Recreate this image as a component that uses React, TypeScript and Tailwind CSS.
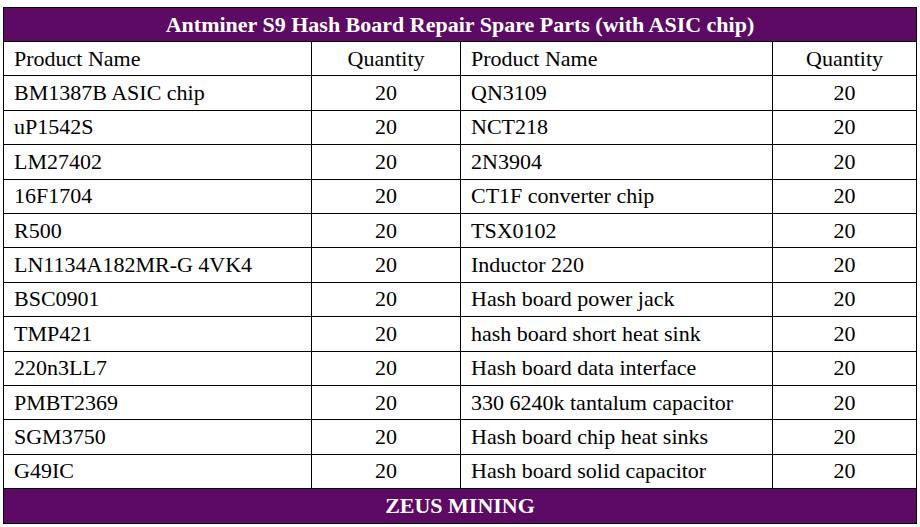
import React from "react";

const LEFT = [
  "BM1387B ASIC chip",
  "uP1542S",
  "LM27402",
  "16F1704",
  "R500",
  "LN1134A182MR-G 4VK4",
  "BSC0901",
  "TMP421",
  "220n3LL7",
  "PMBT2369",
  "SGM3750",
  "G49IC",
];

const RIGHT = [
  "QN3109",
  "NCT218",
  "2N3904",
  "CT1F converter chip",
  "TSX0102",
  "Inductor 220",
  "Hash board power jack",
  "hash board short heat sink",
  "Hash board data interface",
  "330 6240k tantalum capacitor",
  "Hash board chip heat sinks",
  "Hash board solid capacitor",
];

const cell = "border border-black h-[34.4px] p-0 align-middle";

export default function App() {
  return (
    <div className="w-[920px] h-[527px] bg-white pt-[7px] pl-[3px] font-['Liberation_Serif','Times_New_Roman',serif] text-[22px] leading-none text-black">
      <table className="w-[913px] border-collapse table-fixed font-['Liberation_Serif','Times_New_Roman',serif] text-[22px]">
        <colgroup>
          <col className="w-[308px]" />
          <col className="w-[149px]" />
          <col className="w-[312px]" />
          <col className="w-[144px]" />
        </colgroup>
        <thead>
          <tr>
            <th
              colSpan={4}
              className="border border-black bg-[#5c0a64] h-[34px] p-0 text-center font-bold text-white"
            >
              Antminer S9 Hash Board Repair Spare Parts (with ASIC chip)
            </th>
          </tr>
        </thead>
        <tbody>
          <tr>
            <td className={`${cell} pl-[10px]`}>Product Name</td>
            <td className={`${cell} text-center`}>Quantity</td>
            <td className={`${cell} pl-[10px]`}>Product Name</td>
            <td className={`${cell} text-center`}>Quantity</td>
          </tr>
          {LEFT.map((name, i) => (
            <tr key={name}>
              <td className={`${cell} pl-[10px]`}>{name}</td>
              <td className={`${cell} text-center`}>20</td>
              <td className={`${cell} pl-[10px]`}>{RIGHT[i]}</td>
              <td className={`${cell} text-center`}>20</td>
            </tr>
          ))}
          <tr>
            <td
              colSpan={4}
              className="border border-black bg-[#5c0a64] h-[35px] p-0 text-center font-bold text-white"
            >
              ZEUS MINING
            </td>
          </tr>
        </tbody>
      </table>
    </div>
  );
}
